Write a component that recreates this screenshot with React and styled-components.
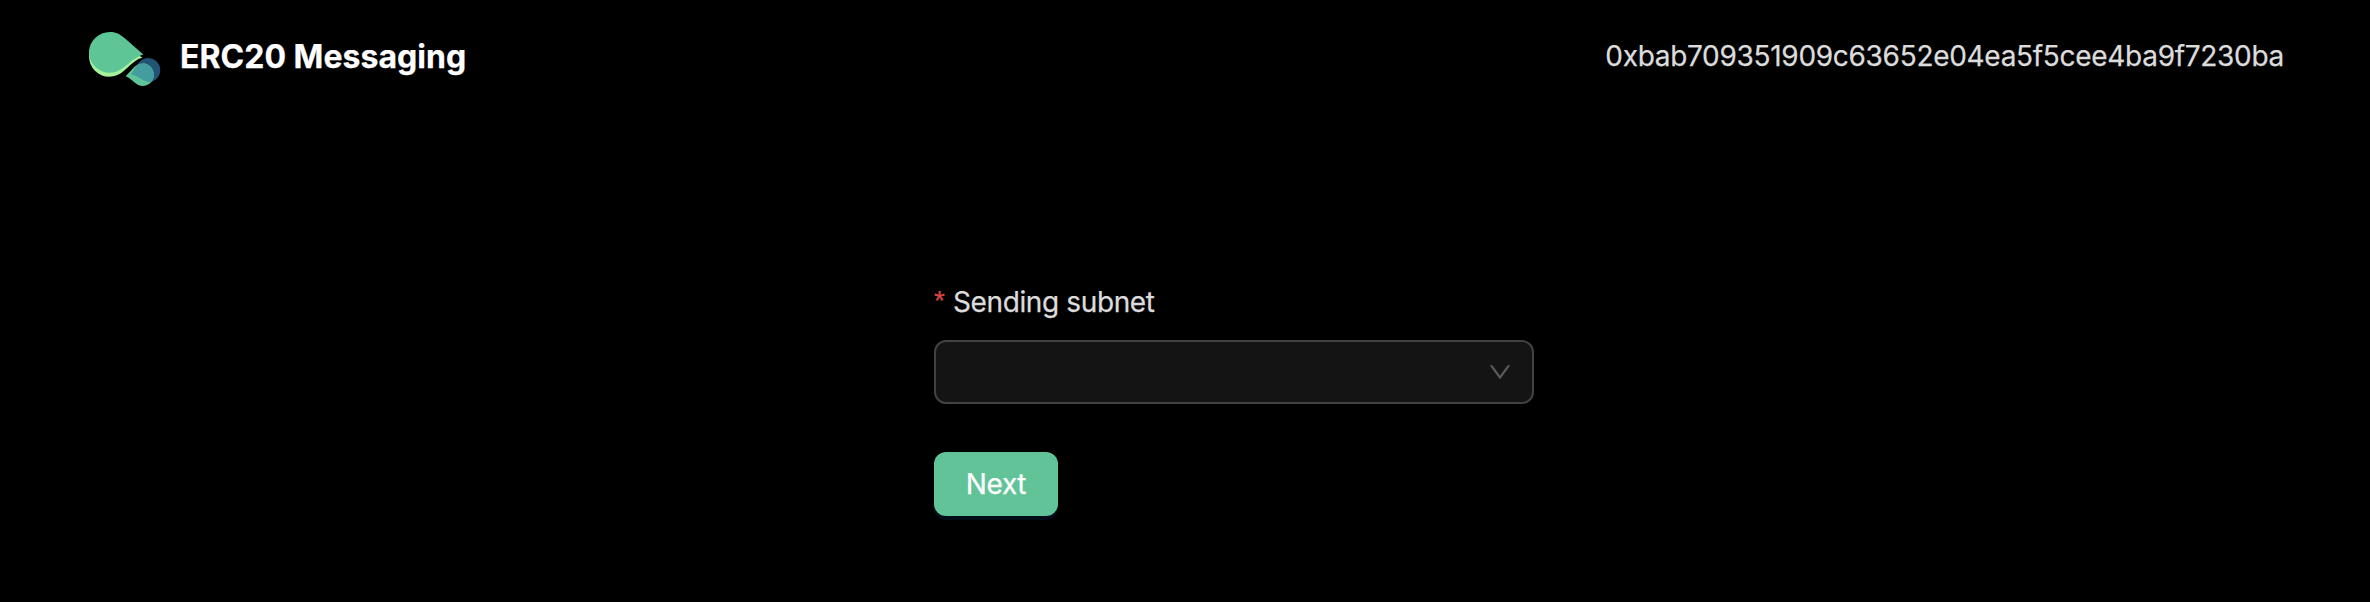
import React from 'react';
import styled, { createGlobalStyle } from 'styled-components';

const GlobalStyle = createGlobalStyle`
  * { box-sizing: border-box; }
  body { margin: 0; background: #000; }
`;

const Page = styled.div`
  min-height: 602px;
  background: #000;
  color: #dcdcdc;
  font-family: Inter, 'Liberation Sans', sans-serif;
  font-size: 28px;
  line-height: 44px;
  letter-spacing: -0.37px;
  -webkit-text-stroke: 0.25px currentColor;
`;

const Header = styled.header`
  display: flex;
  align-items: center;
  justify-content: space-between;
  height: 112px;
  padding: 0 86px 0 80px;
`;

const Brand = styled.div`
  display: flex;
  align-items: center;
  gap: 10px;
`;

const Logo = styled.svg`
  display: block;
  width: 90px;
  height: 72px;
`;

const Title = styled.h1`
  margin: 0;
  padding-top: 2px;
  color: #fff;
  font-size: 32px;
  font-weight: 700;
  letter-spacing: 0.03px;
  white-space: nowrap;
`;

const Address = styled.span`
  letter-spacing: -0.3px;
  white-space: nowrap;
`;

const Form = styled.form`
  width: 600px;
  margin: 168px 0 0 934px;
  display: flex;
  flex-direction: column;
  align-items: flex-start;
`;

const Label = styled.label`
  display: flex;
  align-items: center;
  gap: 8px;
  height: 44px;
  margin-bottom: 16px;
`;

const Required = styled.span`
  padding-bottom: 2px;
  color: #dc4446;
  font-size: 28px;
  line-height: 28px;
  letter-spacing: 0;
  font-family: 'Liberation Sans', sans-serif;
`;

const Select = styled.div`
  display: flex;
  align-items: center;
  justify-content: flex-end;
  width: 100%;
  height: 64px;
  padding: 0 20px;
  border: 2px solid #424242;
  border-radius: 12px;
  background: #141414;
`;

const Chevron = styled.svg`
  width: 24px;
  height: 24px;
  fill: rgba(255, 255, 255, 0.3);
`;

const Button = styled.button`
  height: 64px;
  width: 124px;
  margin-top: 48px;
  padding: 0;
  border: 0;
  border-radius: 12px;
  background: #62c399;
  box-shadow: 0 4px 0 #020b18;
  color: #fff;
  font: inherit;
  letter-spacing: inherit;
`;

const BLUE_DROP = 'M131 74.3C134 70 136 66 139 62.5A12 12 0 1 1 150 82C143 82 139 76 131 74.3Z';
const GREEN_DROP = 'M125.7 76.3L134.5 66.8A11.3 11.3 0 1 1 143 86C135 86 133 79 125.7 76.3Z';

export default function App() {
  return (
    <Page>
      <GlobalStyle />
      <Header>
        <Brand>
          <Logo viewBox="80 20 90 72" aria-hidden="true">
            <defs>
              <clipPath id="blue-drop"><path d={BLUE_DROP} /></clipPath>
            </defs>
            <path fill="#a5f19c" d="M142.5 57.5C128 62 125 76.7 109 76.7A20 20.5 0 0 1 89 56.5V50L110 40Z" />
            <path fill="#5ec596" d="M143.3 54.6L124.5 38C119 33.5 115 32 110 32A21 20.4 0 0 0 110 72.8C123.500 72.8 128 60 143.3 54.6Z" />
            <path fill="#225375" d={BLUE_DROP} />
            <path fill="#5ec596" d={GREEN_DROP} />
            <path fill="#459c9e" clipPath="url(#blue-drop)" d={GREEN_DROP} />
          </Logo>
          <Title>ERC20 Messaging</Title>
        </Brand>
        <Address>0xbab709351909c63652e04ea5f5cee4ba9f7230ba</Address>
      </Header>
      <Form>
        <Label><Required>*</Required>Sending subnet</Label>
        <Select role="combobox">
          <Chevron viewBox="64 64 896 896" aria-hidden="true">
            <path d="M884 256h-75c-5.100 0-9.900 2.500-12.900 6.600L512 654.200 227.900 262.600c-3-4.100-7.800-6.600-12.900-6.600h-75c-6.500 0-10.300 7.400-6.500 12.700l352.600 486.100c12.800 17.600 39 17.600 51.700 0l352.600-486.100c3.900-5.300.1-12.700-6.400-12.700z" />
          </Chevron>
        </Select>
        <Button type="button">Next</Button>
      </Form>
    </Page>
  );
}
